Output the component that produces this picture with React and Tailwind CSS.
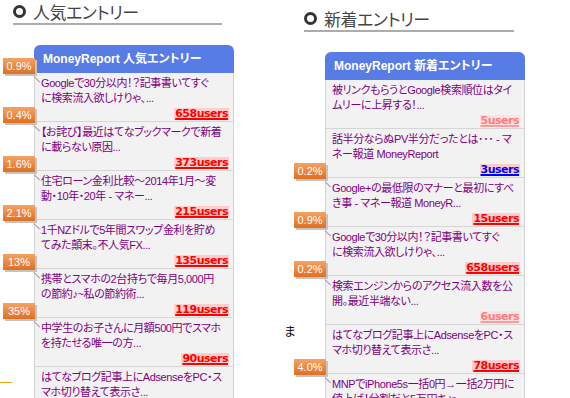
import React from 'react'

const leftItems = [
  { l1: 'Googleで30分以内！？記事書いてすぐ', l2: 'に検索流入欲しけりゃ、...', users: '658users', badge: '0.9%' },
  { l1: '【お詫び】最近はてなブックマークで新着', l2: 'に載らない原因...', users: '373users', badge: '0.4%' },
  { l1: '住宅ローン金利比較～2014年1月～変', l2: '動・10年・20年 - マネー...', users: '215users', badge: '1.6%' },
  { l1: '1千NZドルで5年間スワップ金利を貯め', l2: 'てみた顛末。不人気FX...', users: '135users', badge: '2.1%' },
  { l1: '携帯とスマホの2台持ちで毎月5,000円', l2: 'の節約♪~私の節約術...', users: '119users', badge: '13%' },
  { l1: '中学生のお子さんに月額500円でスマホ', l2: 'を持たせる唯一の方...', users: '90users', badge: '35%' },
  { l1: 'はてなブログ記事上にAdsenseをPC・ス', l2: 'マホ切り替えて表示さ...', users: '', badge: null },
]

const rightItems = [
  { l1: '被リンクもらうとGoogle検索順位はタイ', l2: 'ムリーに上昇する！...', users: '5users', tone: 'faded', badge: null },
  { l1: '話半分ならぬPV半分だったとは･･･ - マ', l2: 'ネー報道 MoneyReport', users: '3users', tone: 'blue', badge: null },
  { l1: 'Google+の最低限のマナーと最初にすべ', l2: 'き事 - マネー報道 MoneyR...', users: '15users', badge: '0.2%' },
  { l1: 'Googleで30分以内！？記事書いてすぐ', l2: 'に検索流入欲しけりゃ、...', users: '658users', badge: '0.9%' },
  { l1: '検索エンジンからのアクセス流入数を公', l2: '開。最近半端ない...', users: '6users', tone: 'faded', badge: '0.2%' },
  { l1: 'はてなブログ記事上にAdsenseをPC・ス', l2: 'マホ切り替えて表示さ...', users: '78users', badge: null },
  { l1: 'MNPでiPhone5s一括0円→一括2万円に', l2: '値上げ！分割だと5万円キャ...', users: '', badge: '4.0%' },
]

const Badge = ({ label }) => (
  <div className="absolute left-[-32px] top-[-15px] z-10">
    <div className="w-[32px] h-[16px] bg-gradient-to-b from-[#f4a263] to-[#e06f1c] text-white text-[11px] leading-[16px] text-center font-['Liberation_Sans',sans-serif] shadow-[2px_2px_0_#c4c4c4]">
      {label}
    </div>
    {/* tail */}
    <div className="absolute left-[31px] top-[18px] w-[8px] h-[1px] bg-[#9a9a9a] rotate-45 origin-left" />
  </div>
)

const Users = ({ text, tone }) => {
  if (!text) return null
  const cls =
    tone === 'blue'
      ? 'bg-[#ffcccc] text-[#0000ff] decoration-[#0000ff]'
      : tone === 'faded'
      ? 'bg-[#ffe3e3] text-[#ff7a7a] decoration-[#ff9a9a]'
      : 'bg-[#ffcccc] text-[#ff0000] decoration-[#ff0000]'
  return (
    <span className={`${cls} font-bold text-[11px] leading-[12px] tracking-[-0.5px] underline decoration-2 underline-offset-[1px] font-['DejaVu_Sans',sans-serif] px-[1px]`}>
      {text}
    </span>
  )
}

const Row = ({ item }) => (
  <div className="relative h-[49px] border-b border-[#d6d6d6] pt-[3px] pl-[6px] pr-[4px]">
    {item.badge && <Badge label={item.badge} />}
    <div className="text-[11px] leading-[15px] tracking-[-0.4px] text-[#800080] whitespace-nowrap overflow-hidden font-['Liberation_Sans','Noto_Sans_CJK_JP',sans-serif] [font-feature-settings:'palt']">
      <div>{item.l1}</div>
      <div>{item.l2}</div>
    </div>
    <div className="flex justify-end h-[13px] items-center mt-[1px]">
      <Users text={item.users} tone={item.tone} />
    </div>
  </div>
)

const Card = ({ title, items }) => (
  <div className="w-[200px] ml-[21px] mt-[20px]">
    <div className="h-[28px] rounded-t-[6px] bg-[#587ce6] flex items-center pl-[9px] text-white font-bold text-[12px] font-['Liberation_Sans','Noto_Sans_CJK_JP',sans-serif] [font-feature-settings:'palt']">
      {title}
    </div>
    <div className="bg-[#f2f2f2] border-x border-[#d4d4d4]">
      {items.map((it, i) => (
        <Row key={i} item={it} />
      ))}
    </div>
  </div>
)

const Heading = ({ text, width }) => (
  <div className={`${width} border-b-2 border-[#acacac] pb-[1px]`}>
    <div className="flex items-center h-[21px] gap-[7px] text-[#444] text-[17px] tracking-[-0.5px] font-['Noto_Sans_CJK_JP',sans-serif] [font-feature-settings:'palt']">
      <span className="w-[13px] h-[13px] rounded-full border-[3px] border-[#333] shrink-0" />
      <span>{text}</span>
    </div>
  </div>
)

export default function App() {
  return (
    <div className="relative w-[570px] h-[398px] overflow-hidden bg-white flex">
      <div className="w-[283px] shrink-0 pl-[13px] pt-[1px]">
        <Heading text="人気エントリー" width="w-[209px]" />
        <Card title="MoneyReport 人気エントリー" items={leftItems} />
      </div>
      <div className="pl-[21px] pt-[8px]">
        <Heading text="新着エントリー" width="w-[210px]" />
        <Card title="MoneyReport 新着エントリー" items={rightItems} />
      </div>

      {/* stray bits at the edges */}
      <div className="absolute left-0 top-[382px] w-[12px] h-[1px] bg-[#f0a000]" />
      <span className="absolute left-[284px] top-[322px] text-[12px] text-black font-['Noto_Sans_CJK_JP',sans-serif]">ま</span>
    </div>
  )
}
